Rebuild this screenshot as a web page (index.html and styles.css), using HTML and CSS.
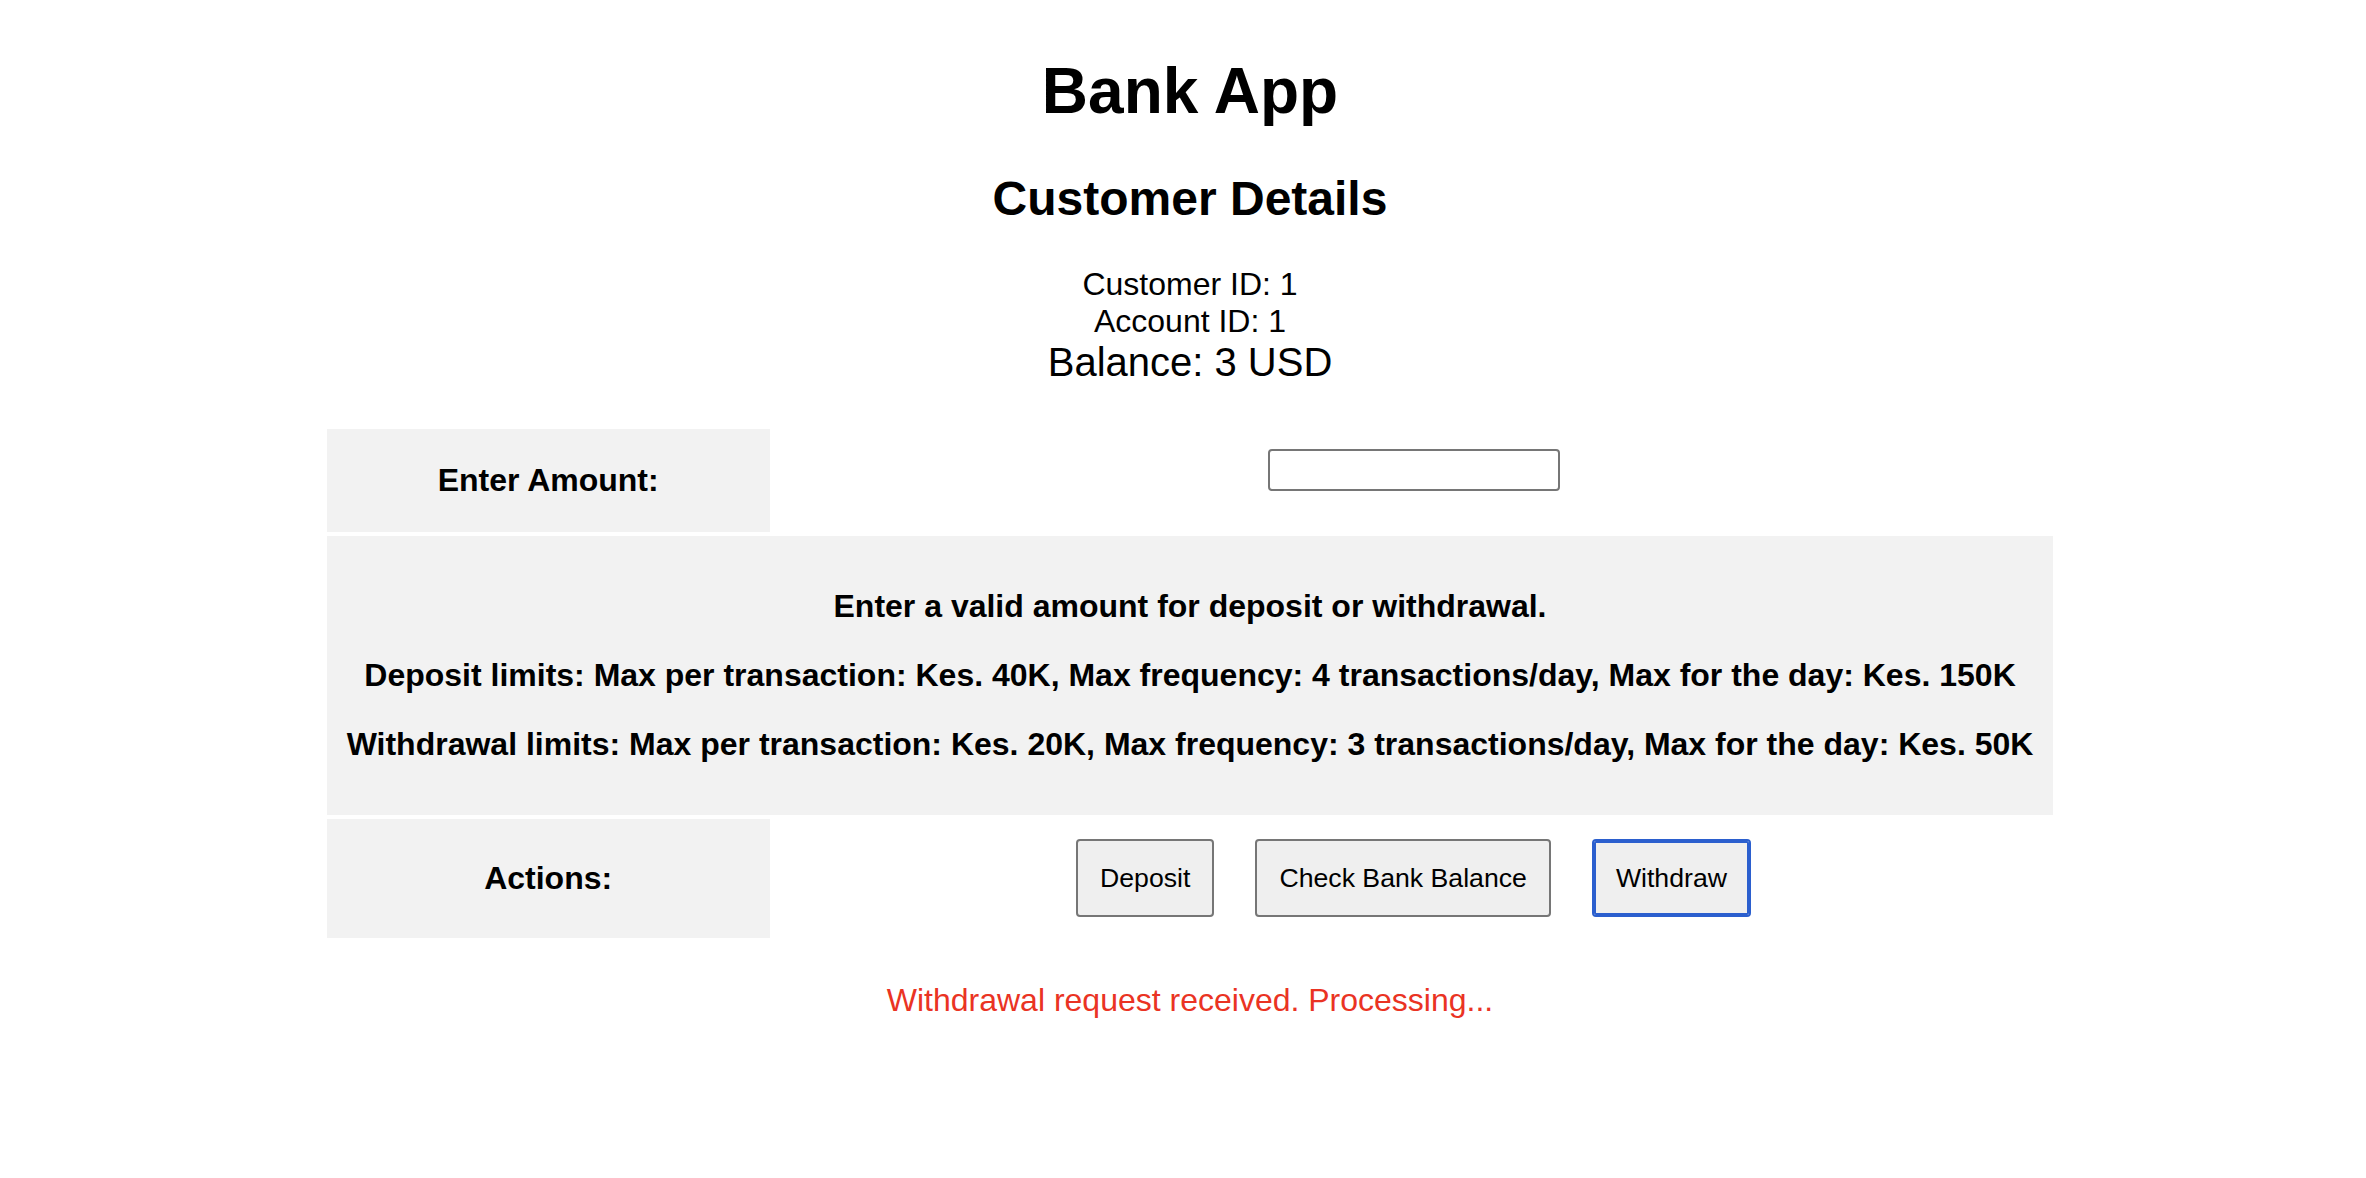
FILE: index.html
```html
<!DOCTYPE html>
<html lang="en">
<head>
<meta charset="utf-8">
<title>Bank App</title>
<link rel="stylesheet" href="styles.css">
</head>
<body>
<div class="page">
  <h1 class="title">Bank App</h1>
  <h2 class="subtitle">Customer Details</h2>
  <div class="info">
    <div class="info-line">Customer ID: 1</div>
    <div class="info-line">Account ID: 1</div>
    <div class="balance">Balance: 3 USD</div>
  </div>
  <table class="tx-table">
    <tr>
      <th class="label">Enter Amount:</th>
      <td class="field"><input class="amount" type="text"></td>
    </tr>
    <tr>
      <th class="limits" colspan="2">
        <p>Enter a valid amount for deposit or withdrawal.</p>
        <p>Deposit limits: Max per transaction: Kes. 40K, Max frequency: 4 transactions/day, Max for the day: Kes. 150K</p>
        <p>Withdrawal limits: Max per transaction: Kes. 20K, Max frequency: 3 transactions/day, Max for the day: Kes. 50K</p>
      </th>
    </tr>
    <tr>
      <th class="label">Actions:</th>
      <td class="field">
        <div class="actions">
          <button class="btn" type="button">Deposit</button>
          <button class="btn" type="button">Check Bank Balance</button>
          <button class="btn btn-focus" type="button">Withdraw</button>
        </div>
      </td>
    </tr>
  </table>
  <p class="status">Withdrawal request received. Processing...</p>
</div>
</body>
</html>
```
FILE: styles.css
```css
html, body {
  margin: 0;
  padding: 0;
  background: #ffffff;
}
body {
  font-family: "Liberation Sans", Arial, Helvetica, sans-serif;
  color: #000000;
}
.page {
  padding-left: 14px;
  text-align: center;
}
.title {
  font-size: 64px;
  font-weight: bold;
  margin: 54px 0 43px;
}
.subtitle {
  font-size: 48px;
  font-weight: bold;
  margin: 0 0 40px;
}
.info-line {
  font-size: 32px;
}
.balance {
  font-size: 40px;
}
.tx-table {
  margin: 40px auto 0;
  border-spacing: 4px;
  font-size: 32px;
}
.tx-table th,
.tx-table td {
  padding: 20px;
  vertical-align: middle;
  text-align: center;
}
.label {
  width: 403px;
  background: #f2f2f2;
  font-weight: bold;
}
.limits {
  background: #f2f2f2;
  font-weight: bold;
}
.limits p {
  margin: 32px 0;
}
.amount {
  display: block;
  box-sizing: border-box;
  width: 292px;
  height: 42px;
  margin: 0 auto 21px;
  border: 2px solid #767676;
  border-radius: 4px;
  background: #ffffff;
  padding: 2px 4px;
  font-size: 26px;
}
.actions {
  display: flex;
  justify-content: center;
  gap: 41px;
  padding-bottom: 1px;
}
.btn {
  font-family: "Liberation Sans", Arial, Helvetica, sans-serif;
  font-size: 26.67px;
  line-height: 30px;
  color: #000000;
  background: #efefef;
  border: 2px solid #767676;
  border-radius: 4px;
  padding: 22px 22px;
  margin: 0;
}
.btn-focus {
  border-color: #2b5fce;
  box-shadow: inset 0 0 0 2px #2b5fce;
}
.status {
  margin: 40px 0 0;
  font-size: 32px;
  color: #ea3323;
}
```
